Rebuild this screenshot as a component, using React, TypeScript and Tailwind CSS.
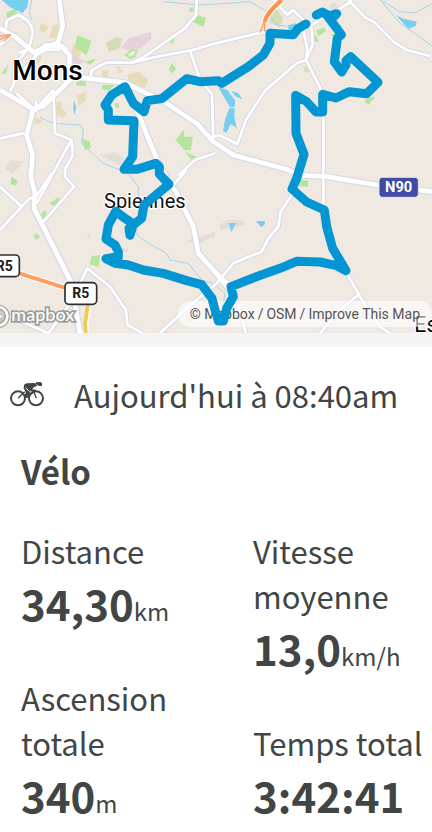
import type { ReactNode } from "react";

// Minor roads: drawn twice, casing first and then the white surface
const minorRoads = [
  "M0 135 L30 112 M18 85 L20 62 L55 45 Q98 65 98 100 L88 140 L45 195 L40 260 M55 160 L88 145",
  "M30 275 L48 235 L110 165 L140 148 L180 150",
  "M272 228 L275 210 L320 187 L395 188 L430 172 L555 85 L588 45 L590 0",
  "M395 188 L480 168 L570 152 L648 130 L785 97 L900 96 L1045 10 L1055 0",
  "M570 152 L600 240 L636 282 L640 430",
  "M1045 0 L1095 52 L1125 68 L1180 125 L1220 150 L1290 168",
  "M820 0 L862 45 L880 30 L935 85 L938 135 L918 180 L890 190 L795 272 L738 360 L712 432 L658 405 L640 412",
  "M910 90 L922 150 L918 180 L960 262 L970 300 L970 620",
  "M160 270 L165 400 L215 420 L200 445 L110 610",
  "M195 500 L195 530 L222 560 L128 668",
  "M215 420 L218 465 L195 510",
  "M0 415 L68 400 L85 405",
  "M105 330 L160 270 M108 305 L108 335 M50 280 L105 330",
  "M0 560 L65 620 L0 690 M65 620 L88 595 L108 590 L155 520",
  "M535 525 L585 480 L645 460 M520 555 L560 510",
  "M240 850 L262 805 L330 860 L378 930 L382 975 L430 1000",
  "M0 935 L145 1000 L200 925 L232 890",
  "M480 1000 L560 925 L648 852 L700 790 L735 775 L785 755 L805 715 L835 680 L842 635 L885 570",
  "M1040 820 L1080 890 L1140 980 L1170 1000 M1080 880 L1020 930 L960 1000",
  "M640 815 L710 900 L738 1000",
];

const mainRoads = [
  "M0 85 L45 110 L105 160 L140 135 L185 140 L208 165 L210 240 L130 318 L100 328 L0 270",
  "M178 0 L188 80 L170 140",
  "M105 155 L170 130 L200 150",
  "M235 232 L375 248 L500 310 L590 370 L640 425 L700 465 L860 508 L900 525 L980 530 L1130 555 L1296 575",
  "M410 330 L480 500 L530 580 L580 680 L595 760 L640 810 L680 850",
  "M100 325 L80 405 L98 465 L92 530 L105 580 L102 625 L150 720 L215 850 L240 1000",
];

const greens = [
  "M18 40 l30 -16 l6 25 l-32 10z",
  "M232 105 l42 18 l-14 42 l-36 -24z",
  "M255 185 l35 -10 l-20 20z",
  "M308 255 l35 0 l-15 18 l-22 -6z",
  "M228 245 l30 -3 l0 15 l-28 0z",
  "M585 42 l33 12 l-8 27 l-32 -17z",
  "M568 25 l12 -4 l0 14 l-10 0z",
  "M507 130 l18 -18 l-5 17z",
  "M515 190 l14 16 l-14 14 l-8 -12z",
  "M344 310 l10 0 l5 12 l-12 3z",
  "M550 390 l4 20 l24 0 l-5 40 l-20 0 l-26 -30z",
  "M555 455 l35 15 l-15 10z",
  "M245 415 l25 10 l2 20 l-18 5z",
  "M5 220 l20 -28 l-8 30z",
  "M35 530 l18 12 l-5 15 l-17 -6z",
  "M148 610 l28 -18 l3 8 l-15 22z",
  "M125 638 l12 -8 l5 18 l-18 8z",
  "M100 706 l10 -5 l10 10 l-12 10z",
  "M275 768 l25 -2 l-5 35 l-26 -8z",
  "M900 538 l25 5 l-2 18 l-25 -3z",
  "M1105 290 l22 0 l-22 24 l-12 -10z",
  "M948 92 l25 -10 l5 12 l-22 15z",
  "M938 110 l10 -3 l8 18 l-10 0z",
  "M795 120 l15 25 l-15 30z",
  "M995 102 l12 0 l-5 24z",
  "M480 1000 l22 -5 l0 5z",
];

const sands = [
  "M122 68 l24 14 l-14 18 l-14 -10z",
  "M158 75 l18 -2 l0 42 l-28 0z",
  "M220 128 l25 30 l-15 22 l-18 -5z",
  "M108 150 l18 24 l-12 18 l-12 -6z",
  "M385 222 l30 -6 l30 20 l-8 27 l-55 -10z",
  "M230 285 l28 -8 l0 22 l-22 18z",
  "M170 305 l15 0 l0 20 l15 15 l-12 14 l-20 -10z",
  "M105 352 l25 8 l-10 12 l-18 0z",
  "M345 192 l25 22 l-12 8z",
  "M305 210 l20 0 l0 20 l-18 0z",
  "M180 240 l18 -6 l0 20z",
];

const waters = [
  "M5 0 L85 0 L82 20 L68 40 L28 20z",
  "M222 300 L228 320 L224 345 L220 330z",
  "M655 262 L682 270 L706 302 L703 320 L690 322z",
  "M688 325 L704 325 L703 350 L710 384 L692 372 L680 398 L669 393 L675 360z",
  "M693 273 L715 280 L727 298 L708 290z",
  "M1188 45 L1210 56 L1250 65 L1247 78 L1225 87z",
  "M864 76 L888 70 L890 92 L866 94z",
  "M686 670 L708 668 L694 697z",
  "M767 664 L795 663 L794 672 L785 682z",
];

const streams = [
  "M95 0 L88 35 L96 60",
  "M120 352 L160 370 L240 375 L250 390 L245 430 L310 490 L385 520 L415 560 L418 640 L410 705 L445 730 L500 760 L510 780 L565 790 L605 840 L640 850 L675 880 L668 920",
  "M1140 0 L1200 35 L1245 38 L1296 12",
  "M1145 5 L1200 70 L1230 90 L1296 138",
  "M490 5 L600 15 L648 12 L750 5 L800 35 L830 75 L870 80",
];

const track =
  "M949 45 L967 36 L985 48 L1010 41 L994 58 M978 42 L1024 104 L1012 115 L1003 185 L1025 216 L1038 195 L1038 182 L1052 170 L1134 247 L1100 281 L1048 275 L1008 294 L968 283 L968 336 L948 336 L920 305 L887 286 L888 400 L912 463 L890 535 L876 567 L920 606 L973 630 L980 680 L998 745 L1038 812 L1010 797 L960 786 L890 784 L840 805 L775 828 L693 860 L700 890 L680 925 L670 963 L655 963 L645 930 L636 895 L605 854 L560 842 L490 820 L430 810 L385 795 L345 790 L318 776 L355 770 L355 755 L345 735 L318 717 L325 675 L347 634 L375 655 L400 672 L390 706 L387 685 L425 655 L432 615 L450 600 L507 553 L478 522 L478 500 L468 490 L410 508 L372 508 L398 470 L402 362 L325 360 L325 330 L315 315 L335 285 L375 260 L400 310 L432 335 L442 302 L485 296 L560 236 L600 245 L655 242 L665 250 L745 200 L790 165 L810 130 L810 100 L880 104 L895 85 L918 72";

function RoadShield({
  x,
  y,
  width,
  children,
}: {
  x: number;
  y: number;
  width: number;
  children: ReactNode;
}) {
  return (
    <g>
      <rect x={x} y={y} width={width} height="65" rx="12" fill="#fff" stroke="#2b2f33" strokeWidth="5" />
      <text
        x={x + width / 2}
        y={y + 47}
        textAnchor="middle"
        fontSize="42"
        fontWeight="700"
        fill="#1c1c1c"
      >
        {children}
      </text>
    </g>
  );
}

function BaseMap() {
  return (
    <svg
      viewBox="0 0 1296 999"
      className="block w-full font-['Roboto',sans-serif]"
      role="img"
      aria-label="Mons"
    >
      <rect width="1296" height="999" fill="#efe9e1" />
      <g fill="#e4ddd5">
        <path d="M300 465 l40 -8 l30 15 l-10 25z M30 480 l42 5 l-35 38 l-20 -15z M658 675 l25 -14 l45 0 l10 12 l-75 16z M550 725 l95 -30 l0 15 l-45 20z" />
        <path d="M262 708 l10 -10 l-4 22z M362 745 l22 0 l0 10 l-22 0z M990 12 l18 -4 l5 18 l-25 0z" />
      </g>
      <g fill="#e6dcb8">
        {sands.map((d) => (
          <path key={d} d={d} />
        ))}
      </g>
      <path d="M316 130 L350 110 L366 118 L360 145 L328 155z M805 45 L830 28 L850 55 L840 82 L805 65z M912 200 l16 -4 l6 20 l-20 0z" fill="#d5ddb8" />
      <path d="M362 145 L385 115 L452 96 L455 115 L425 145 L385 150z M220 168 l38 14 l-20 12 l-20 -4z" fill="#e8d1da" />
      <g fill="#b3e59c">
        {greens.map((d) => (
          <path key={d} d={d} />
        ))}
      </g>
      <path d="M378 165 L395 150 L410 152 L405 168 L392 174z" fill="none" stroke="#b3e59c" strokeWidth="6" />
      <g fill="#75cff0">
        {waters.map((d) => (
          <path key={d} d={d} />
        ))}
      </g>
      <g fill="none" stroke="#a5d5e8" strokeWidth="3">
        {streams.map((d) => (
          <path key={d} d={d} />
        ))}
      </g>

      <g fill="none" strokeLinejoin="round">
        <g stroke="#d8d9e6" strokeWidth="14">
          {minorRoads.map((d) => (
            <path key={d} d={d} />
          ))}
        </g>
        <g stroke="#d8d9e6" strokeWidth="21">
          {mainRoads.map((d) => (
            <path key={d} d={d} />
          ))}
        </g>
        <g stroke="#fff" strokeWidth="8">
          {minorRoads.map((d) => (
            <path key={d} d={d} />
          ))}
        </g>
        <g stroke="#fff" strokeWidth="14">
          {mainRoads.map((d) => (
            <path key={d} d={d} />
          ))}
        </g>
        {/* Motorway stretches */}
        <path d="M0 108 L32 104 L12 124 M0 118 L24 108" stroke="#f9a063" strokeWidth="4" />
        <path d="M58 820 L200 865" stroke="#fff" strokeWidth="18" />
        <path d="M58 820 L200 865" stroke="#ff9e5e" strokeWidth="12" />
        <path d="M845 0 Q800 38 794 65" stroke="#fff" strokeWidth="20" />
        <path d="M845 0 Q800 38 794 65" stroke="#ff924d" strokeWidth="13" />
        <path d="M794 62 L780 98 M794 62 L794 95" stroke="#f9a063" strokeWidth="4" />
        <path d="M264 910 L256 1000" stroke="#fff" strokeWidth="18" />
        <path d="M264 910 L255 970 L257 1000" stroke="#eec95c" strokeWidth="12" />
      </g>

      <g
        stroke="#fff"
        strokeWidth="8"
        strokeLinejoin="round"
        paintOrder="stroke"
        fill="#000"
      >
        <text x="37" y="239" fontSize="84" fontWeight="500">
          Mons
        </text>
        <text x="312" y="624" fontSize="60" fill="#111">
          Spiennes
        </text>
        <text x="1243" y="996" fontSize="64">
          Es
        </text>
      </g>

      <RoadShield x={-32} y={765} width={90}>
        R5
      </RoadShield>
      <RoadShield x={195} y={848} width={95}>
        R5
      </RoadShield>
      <rect x="1137" y="532" width="118" height="60" rx="10" fill="#3d4ba3" stroke="#e3e5f0" strokeWidth="3" />
      <text x="1196" y="577" textAnchor="middle" fontSize="44" fontWeight="700" fill="#fff">
        N90
      </text>

      {/* Mapbox wordmark */}
      <g stroke="#8d8b88" strokeOpacity="0.8" strokeWidth="10" paintOrder="stroke" fill="#fff">
        <circle cx="-6" cy="949" r="28" fill="#8d8b88" fillOpacity="0.4" strokeWidth="15" />
        <circle cx="-6" cy="949" r="28" fill="none" stroke="#fff" strokeOpacity="1" strokeWidth="8" />
        <path d="M-12 934 L-2 944 L10 949 L-2 954 L-12 964z" stroke="none" />
        <text x="34" y="964" fontSize="54" fontWeight="500" className="font-['Lato',sans-serif]">
          mapbox
        </text>
      </g>
    </svg>
  );
}

// Sits above the attribution pill
function TrackLayer() {
  return (
    <svg viewBox="0 0 1296 999" className="pointer-events-none absolute top-0 left-0 w-full" aria-hidden="true">
      <path
        d={track}
        fill="none"
        stroke="#0496d3"
        strokeWidth="27"
        strokeLinecap="round"
        strokeLinejoin="round"
      />
    </svg>
  );
}

function CyclistIcon() {
  return (
    <svg viewBox="0 0 102 74" className="w-[34px] shrink-0" fill="none" stroke="#414645" aria-hidden="true">
      <circle cx="24" cy="49" r="21" strokeWidth="6" />
      <circle cx="78" cy="49" r="21" strokeWidth="6" />
      <path d="M24 49 L44 29 M50 47 L72 29 M70 25 L79 49" strokeWidth="4" />
      <path d="M42 8 L50 4 L74 3 L83 11 L74 14 L66 22 L78 23 L78 29 L60 28 L56 22 L61 34 L52 47 L43 47 L47 31 L41 19z" fill="#414645" stroke="none" />
      <path d="M47 18 L56 26" stroke="#fff" strokeWidth="3" />
      <path d="M77 1 L92 0 Q99 5 95 12 L87 12 L77 5z" fill="#414645" stroke="none" />
    </svg>
  );
}

interface StatProps {
  label: string;
  value: string;
  unit?: string;
}

function Stat({ label, value, unit }: StatProps) {
  return (
    <div>
      <dt className="text-[31px] leading-[45px]">{label}</dt>
      <dd className="text-[42px] leading-[60px] font-bold whitespace-nowrap">
        {value}
        {unit && <span className="text-2xl leading-none font-normal">{unit}</span>}
      </dd>
    </div>
  );
}

export default function App() {
  return (
    <main className="min-h-screen overflow-hidden bg-white font-['Noto_Sans_CJK_SC',sans-serif] text-[#414645]">
      {/* Map */}
      <div className="relative border-b-14 border-[#f4f4f4]">
        <BaseMap />
        <div className="absolute right-0 bottom-1.5 flex h-[26px] items-center gap-[3px] rounded-full bg-white/60 px-3 font-['Roboto',sans-serif] text-sm whitespace-nowrap text-[#555]">
          <a href="#mapbox">© Mapbox</a>
          <span>/</span>
          <a href="#osm">OSM</a>
          <span>/</span>
          <a href="#improve">Improve This Map</a>
        </div>
        <TrackLayer />
      </div>

      {/* Activity header */}
      <div className="flex items-center gap-[30px] pt-[25px] pl-2.5">
        <CyclistIcon />
        <p className="text-[31px] leading-[45px] whitespace-nowrap">Aujourd'hui à 08:40am</p>
      </div>
      <h1 className="mt-8 pl-[21px] text-[33px] leading-[45px] font-bold">Vélo</h1>

      {/* Stats */}
      <dl className="mt-[34px] grid grid-cols-[210px_1fr] gap-x-[22px] pl-[21px]">
        <div className="flex flex-col gap-[42px]">
          <Stat label="Distance" value="34,30" unit="km" />
          <Stat label="Ascension totale" value="340" unit="m" />
        </div>
        <div className="flex flex-col gap-[42px]">
          <Stat label="Vitesse moyenne" value="13,0" unit="km/h" />
          <Stat label="Temps total" value="3:42:41" />
        </div>
      </dl>
    </main>
  );
}
